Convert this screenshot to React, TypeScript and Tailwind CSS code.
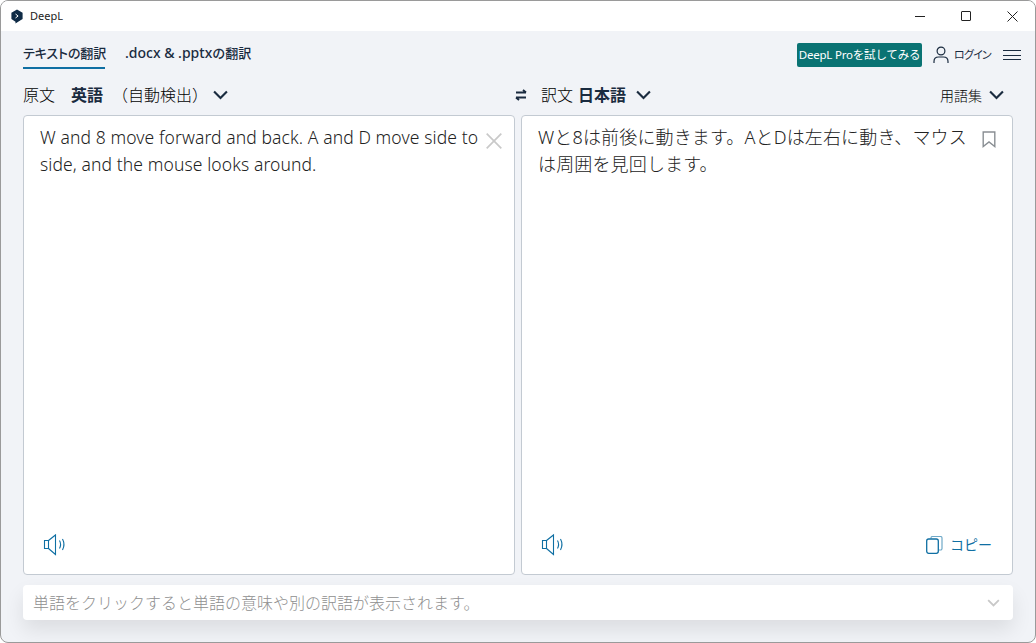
const font = { fontFamily: '"Noto Sans", "Noto Sans CJK JP", sans-serif' };

function Chevron({ className = "" }: { className?: string }) {
  return (
    <svg viewBox="0 0 14 9" className={className} fill="none" stroke="currentColor" strokeWidth="2">
      <path d="M1 1.200 7 7.200l6-6" />
    </svg>
  );
}

function Speaker() {
  return (
    <svg width="24" height="24" viewBox="0 0 24 24" fill="none" stroke="#0f6fa3" strokeWidth="1.100">
      <path d="M1.500 7.500h4v8h-4z" />
      <path d="M5.500 7.500 12.500 2v19.500l-7-6" />
      <path d="M16.500 7.500c1.400 2.600 1.400 5.400 0 8" />
      <path d="M19.500 6c1.900 3.600 1.900 7.400 0 11" />
    </svg>
  );
}

export default function App() {
  return (
    <div className="w-[1036px] h-[643px] bg-white overflow-hidden">
      <div
        className="w-full h-full flex flex-col rounded-[8px] border border-[#9a9a9a] bg-[#f1f3f7] overflow-hidden text-[#1a2b3f]"
        style={font}
      >
        {/* title bar */}
        <div className="h-[30px] shrink-0 bg-white flex items-center pl-[10px]">
          <svg width="12" height="15" viewBox="0 0 12 15" className="mr-[7px]">
            <path d="M6 0.500 11.600 3.700v6.400L6.800 13 4.500 14.600V12.800L.4 10.100V3.700z" fill="#0f2b46" />
            <path d="M4.500 5l2.600 2L4.500 9" fill="none" stroke="#fff" strokeWidth="1" />
          </svg>
          <span className="text-[11px] text-[#222]">DeepL</span>
          <div className="ml-auto flex items-center h-full">
            <div className="w-[46px] flex justify-center">
              <div className="w-[10px] h-px bg-[#222]" />
            </div>
            <div className="w-[46px] flex justify-center">
              <div className="w-[10px] h-[10px] rounded-[1px] border border-[#222]" />
            </div>
            <div className="w-[46px] flex justify-center">
              <svg width="11" height="11" viewBox="0 0 11 11" stroke="#222" strokeWidth="1">
                <path d="M.5.5l10 10M10.500.5l-10 10" />
              </svg>
            </div>
          </div>
        </div>

        {/* tabs */}
        <div className="h-[38px] shrink-0 flex items-start pl-[22px] pr-[14px]">
          <div className="flex flex-col h-full w-[82px]">
            <span className="text-[13px] leading-[18px] mt-[13px] font-medium whitespace-nowrap tracking-[-0.1px] [font-feature-settings:'palt']">
              テキストの翻訳
            </span>
            <div className="h-[2px] w-[82px] bg-[#0f6fa3] mt-[5px]" />
          </div>
          <span className="ml-[20px] text-[14px] leading-[18px] mt-[13px] font-medium whitespace-nowrap">
            .docx &amp; .pptx<span className="text-[13px]">の翻訳</span>
          </span>
          <div className="ml-auto flex items-center mt-[12px]">
            <div className="h-[24px] w-[125px] rounded-[2px] bg-[#0a7373] text-white text-[11.5px] tracking-[-0.2px] flex items-center justify-center whitespace-nowrap">
              DeepL Proを試してみる
            </div>
            <svg width="16" height="18" viewBox="0 0 16 18" className="ml-[11px]" fill="none" stroke="#1a2b3f" strokeWidth="1.200">
              <circle cx="8" cy="5" r="3.900" />
              <path d="M1 17v-1.500C1 12.500 3 11 5.500 11h5c2.500 0 4.500 1.500 4.500 4.500V17" />
            </svg>
            <span className="ml-[5px] text-[11px] w-[35px] whitespace-nowrap [font-feature-settings:'palt'] tracking-[-0.8px]">ログイン</span>
            <div className="ml-[14px] flex flex-col gap-[3.500px]">
              <div className="w-[18px] h-px bg-[#1a2b3f]" />
              <div className="w-[18px] h-px bg-[#1a2b3f]" />
              <div className="w-[18px] h-px bg-[#1a2b3f]" />
            </div>
          </div>
        </div>

        {/* language row */}
        <div className="h-[46px] shrink-0 flex items-center pl-[22px] pr-[31px] pt-[6px]">
          <div className="w-[491px] flex items-center text-[16px]">
            <span className="font-light text-black">原文</span>
            <span className="ml-[16px] font-bold">英語</span>
            <span className="ml-[9px] font-light text-black">（自動検出）</span>
            <Chevron className="ml-[5px] w-[15px] h-[10px]" />
          </div>
          <svg width="12" height="12" viewBox="0 0 12 12" className="ml-[1px]" fill="none" stroke="#1a2b3f" strokeWidth="1.800">
            <path d="M1 3.500h10M8 .8l3 2.700M11 8.500H1M4 11.200l-3-2.700" />
          </svg>
          <span className="ml-[14px] text-[16px] font-light text-black">訳文</span>
          <span className="ml-[5px] text-[16px] font-bold">日本語</span>
          <Chevron className="ml-[10px] w-[15px] h-[10px]" />
          <span className="ml-auto text-[14px] font-light text-black">用語集</span>
          <Chevron className="ml-[7px] w-[15px] h-[10px]" />
        </div>

        {/* panels */}
        <div className="h-[460px] shrink-0 flex gap-[6px] px-[22px]">
          <div className="w-[492px] h-full relative rounded-[4px] border border-[#c3cad2] bg-white pl-[16px] pr-[30px] pt-[8px]">
            <p className="text-[17.5px] font-light tracking-[0.1px] leading-[27px] text-[#222]">
              W and 8 move forward and back. A and D move side to side, and the mouse looks around.
            </p>
            <svg width="16" height="16" viewBox="0 0 16 16" className="absolute right-[12px] top-[17px]" stroke="#c9c9c9" strokeWidth="1.700">
              <path d="M.7.7l14.600 14.600M15.300.7.700 15.300" />
            </svg>
            <div className="absolute left-[19px] bottom-[17px]">
              <Speaker />
            </div>
          </div>
          <div className="w-[492px] h-full relative rounded-[4px] border border-[#c3cad2] bg-white pl-[16px] pr-[35px] pt-[8px]">
            <p className="text-[18px] leading-[27px] tracking-[0.15px] text-[#222] font-light">
              Wと8は前後に動きます。AとDは左右に動き、マウスは周囲を見回します。
            </p>
            <svg width="14" height="17" viewBox="0 0 14 17" className="absolute right-[16px] top-[15px]" fill="none" stroke="#8a8f94" strokeWidth="1.400">
              <path d="M1.200 1h11.600v14.500L7 11l-5.800 4.500z" />
            </svg>
            <div className="absolute left-[19px] bottom-[17px]">
              <Speaker />
            </div>
            <div className="absolute right-[20px] bottom-[19px] flex items-center text-[#0f6fa3]">
              <svg width="17" height="18" viewBox="0 0 17 18" fill="none" stroke="#0f6fa3">
                <path d="M5 2.500V2a1.500 1.500 0 0 1 1.500-1.500h8A1.500 1.500 0 0 1 16 2v10.500a1.500 1.500 0 0 1-1.500 1.500H13" strokeOpacity="0.6" strokeWidth="1.200" />
                <rect x="0.700" y="3" width="11.600" height="14.300" rx="2" strokeWidth="1.300" />
              </svg>
              <span className="ml-[7px] text-[14px]">コピー</span>
            </div>
          </div>
        </div>

        {/* hint bar */}
        <div className="mt-[10px] mx-[22px] h-[35px] shrink-0 rounded-[4px] bg-white flex items-center pl-[10px] pr-[13px] shadow-[0_10px_20px_rgba(0,0,0,0.09)]">
          <span className="text-[16px] font-light text-[#8f8f8f]">単語をクリックすると単語の意味や別の訳語が表示されます。</span>
          <Chevron className="ml-auto w-[13px] h-[8px] text-[#c8c8c8]" />
        </div>
      </div>
    </div>
  );
}
